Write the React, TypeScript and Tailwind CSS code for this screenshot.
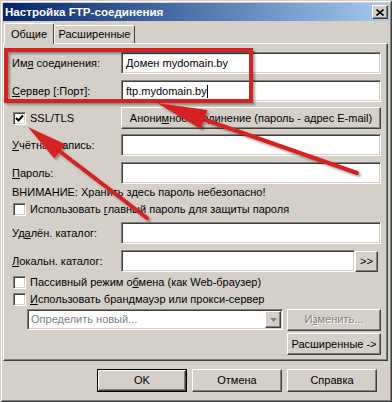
import React from "react";

const sunken =
  "bg-white border border-t-[#808080] border-l-[#808080] border-b-white border-r-white shadow-[inset_1px_1px_0_#404040,inset_-1px_-1px_0_#d4d0c8]";
const raised =
  "bg-[#d4d0c8] border border-t-white border-l-white border-b-[#404040] border-r-[#404040] shadow-[inset_-1px_-1px_0_#808080]";

function Input({ children, className = "" }: { children?: React.ReactNode; className?: string }) {
  return (
    <div className={`h-[22px] flex items-center pl-[4px] text-black whitespace-nowrap ${sunken} ${className}`}>{children}</div>
  );
}

function Btn({
  children,
  className = "",
  disabled = false,
}: {
  children?: React.ReactNode;
  className?: string;
  disabled?: boolean;
}) {
  return (
    <div
      className={`flex items-center justify-center whitespace-nowrap ${raised} ${
        disabled ? "text-[#808080] [text-shadow:1px_1px_0_#ffffff]" : "text-black"
      } ${className}`}
    >
      {children}
    </div>
  );
}

function Check({ checked = false }: { checked?: boolean }) {
  return (
    <div className={`w-[13px] h-[13px] shrink-0 flex items-center justify-center ${sunken}`}>
      {checked && (
        <svg width="9" height="9" viewBox="0 0 9 9">
          <path d="M1 4 L3.5 6.5 L8 1.5" stroke="#000" strokeWidth="2" fill="none" />
        </svg>
      )}
    </div>
  );
}

function Row({ label, children }: { label: React.ReactNode; children: React.ReactNode }) {
  return (
    <div className="flex items-center">
      <div className="w-[109px] shrink-0 text-black whitespace-nowrap">{label}</div>
      <div className="flex-1 flex">{children}</div>
    </div>
  );
}

export default function App() {
  return (
    <div className="relative w-[392px] h-[402px] overflow-hidden bg-[#d4d0c8] font-['Liberation_Sans',Arial,sans-serif] text-[11px] leading-none shadow-[inset_1px_1px_0_#d4d0c8,inset_-1px_-1px_0_#404040,inset_2px_2px_0_#ffffff,inset_-2px_-2px_0_#808080] pt-[3px]">
      {/* Title bar */}
      <div className="mx-[3px] h-[18px] flex items-center justify-between bg-linear-to-r from-[#0a246a] to-[#a6caf0] pl-[2px] pr-[1px]">
        <span className="text-white font-bold text-[11.6px] whitespace-nowrap">Настройка FTP-соединения</span>
        <div className={`w-[16px] h-[14px] flex items-center justify-center ${raised}`}>
          <svg width="8" height="7" viewBox="0 0 8 7">
            <path d="M0.5 0.5 L7.5 6.5 M7.5 0.5 L0.5 6.5" stroke="#000" strokeWidth="1.6" />
          </svg>
        </div>
      </div>

      {/* Tabs */}
      <div className="ml-[3px] h-[22px] flex items-end pl-[1px]">
        <div className="relative z-10 -mb-[1px] w-[50px] h-[21px] bg-[#d4d0c8] border-l border-t border-r border-l-white border-t-white border-r-[#404040] rounded-t-[2px] flex items-start justify-center pt-[5px]">
          Общие
        </div>
        <div className="w-[81px] h-[18px] bg-[#d4d0c8] border-l border-t border-r border-l-white border-t-white border-r-[#404040] rounded-t-[2px] flex items-start justify-center pt-[3px] whitespace-nowrap">
          Расширенные
        </div>
      </div>

      {/* Panel */}
      <div className="ml-[3px] w-[385px] h-[318px] border border-t-white border-l-white border-b-[#404040] border-r-[#404040] shadow-[inset_-1px_-1px_0_#808080] pl-[8px] pr-[6px] pt-[8px] flex flex-col">
        <Row
          label={
            <>
              Им<u>я</u> соединения:
            </>
          }
        >
          <Input className="flex-1">Домен mydomain.by</Input>
        </Row>
        <div className="mt-[6px]">
          <Row
            label={
              <>
                <u>С</u>ервер [:Порт]:
              </>
            }
          >
            <Input className="flex-1">
              ftp.mydomain.by<span className="inline-block w-[1px] h-[13px] bg-black" />
            </Input>
          </Row>
        </div>
        <div className="mt-[5px] flex items-center h-[22px]">
          <div className="w-[109px] shrink-0 flex items-center pl-[1px] gap-[4px]">
            <Check checked />
            <span>SSL/TLS</span>
          </div>
          <Btn className="flex-1 h-[22px]">
            Анони<u>м</u>ное соединение (пароль - адрес E-mail)
          </Btn>
        </div>
        <div className="mt-[5px]">
          <Row
            label={
              <>
                <u>У</u>чётная запись:
              </>
            }
          >
            <Input className="flex-1" />
          </Row>
        </div>
        <div className="mt-[6px]">
          <Row
            label={
              <>
                <u>П</u>ароль:
              </>
            }
          >
            <Input className="flex-1" />
          </Row>
        </div>
        <div className="h-[16px] flex items-center whitespace-nowrap">ВНИМАНИЕ: Хранить здесь пароль небезопасно!</div>
        <div className="mt-[1px] h-[17px] flex items-center pl-[1px] gap-[4px] whitespace-nowrap">
          <Check />
          <span>
            Использовать <u>г</u>лавный пароль для защиты пароля
          </span>
        </div>
        <div className="mt-[4px]">
          <Row
            label={
              <>
                Уд<u>а</u>лён. каталог:
              </>
            }
          >
            <Input className="flex-1" />
          </Row>
        </div>
        <div className="mt-[6px]">
          <Row
            label={
              <>
                <u>Л</u>окальн. каталог:
              </>
            }
          >
            <Input className="flex-1" />
            <Btn className="w-[23px] h-[21px] mr-[3px] mt-[1px]">&gt;&gt;</Btn>
          </Row>
        </div>
        <div className="mt-[2px] h-[17px] flex items-center pl-[1px] gap-[4px] whitespace-nowrap">
          <Check />
          <span>
            Пассивный режим о<u>б</u>мена (как Web-браузер)
          </span>
        </div>
        <div className="h-[17px] flex items-center pl-[1px] gap-[4px] whitespace-nowrap">
          <Check />
          <span>
            <u>И</u>спользовать брандмауэр или прокси-сервер
          </span>
        </div>
        <div className="mt-[1px] h-[21px] flex items-center">
          <div className={`ml-[15px] w-[256px] h-[21px] flex items-center justify-between ${sunken}`}>
            <span className="pl-[3px] text-[#808080] whitespace-nowrap">Определить новый...</span>
            <div className={`w-[16px] h-[17px] mr-[1px] flex items-center justify-center ${raised}`}>
              <svg width="7" height="4" viewBox="0 0 7 4">
                <path d="M0 0 H7 L3.5 4 Z" fill="#808080" />
              </svg>
            </div>
          </div>
          <Btn disabled className="ml-[4px] w-[94px] h-[22px]">
            И<u>з</u>менить...
          </Btn>
        </div>
        <div className="mt-[3px] flex justify-end">
          <Btn className="w-[94px] h-[22px]">Расширенные -&gt;</Btn>
        </div>
      </div>

      {/* Bottom buttons */}
      <div className="mt-[8px] flex pl-[97px] gap-[5px]">
        <div className="border border-black">
          <Btn className="w-[88px] h-[21px]">OK</Btn>
        </div>
        <Btn className="w-[90px] h-[23px]">Отмена</Btn>
        <Btn className="w-[90px] h-[23px]">Справка</Btn>
      </div>

      {/* Annotation overlay */}
      <svg className="absolute left-0 top-0 pointer-events-none" width="392" height="402" viewBox="0 0 392 402">
        <defs>
          <filter id="sh" x="-10%" y="-10%" width="130%" height="130%">
            <feDropShadow dx="2" dy="2" stdDeviation="1.2" floodColor="#000" floodOpacity="0.35" />
          </filter>
        </defs>
        <g filter="url(#sh)">
          <rect x="6" y="50" width="245" height="51" fill="none" stroke="#d42222" strokeWidth="4" />
          <line x1="357" y1="173" x2="200" y2="118" stroke="#d42222" strokeWidth="4" strokeLinecap="round" />
          <polygon points="157,103 200.9,128.9 207.5,110.1" fill="#d42222" />
          <line x1="147" y1="218" x2="58" y2="150" stroke="#d42222" strokeWidth="4" strokeLinecap="round" />
          <polygon points="28,127 54.3,158.4 65.3,144.2" fill="#d42222" />
        </g>
      </svg>
    </div>
  );
}
